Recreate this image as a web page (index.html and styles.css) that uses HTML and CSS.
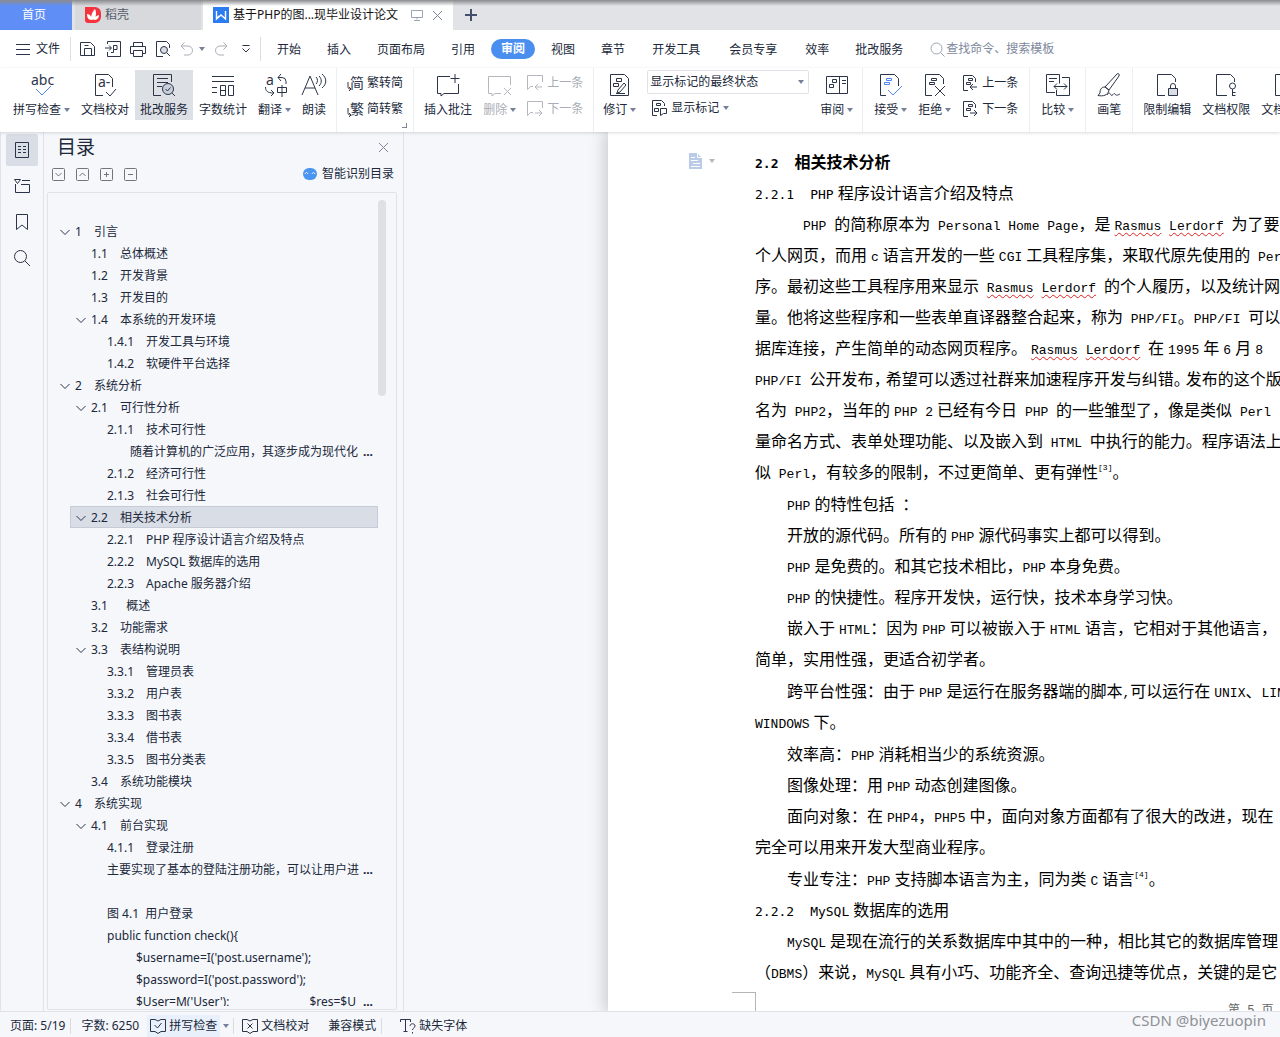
FILE: index.html
```html
<!DOCTYPE html>
<html lang="zh-CN">
<head>
<meta charset="utf-8">
<title>基于PHP的图书管理系统</title>
<link rel="stylesheet" href="styles.css">
</head>
<body>
<svg class="defs" aria-hidden="true">
  <symbol id="chev" viewBox="0 0 10 10"><path d="M.5 3l4.500 4.500L9.500 3"/></symbol>
  <symbol id="cprev" viewBox="0 0 16 16"><path d="M15.500 7V.5H.5v14l3-3H6M15 12H8M11 9l-3 3 3 3"/></symbol>
  <symbol id="cnext" viewBox="0 0 16 16"><path d="M15.500 7V.5H.5v14l3-3H6M8 12h7M12 9l3 3-3 3"/></symbol>
  <symbol id="rprev" viewBox="0 0 16 16"><path d="M6 15.500H1.500V.5h9l3 3V7M6.500 3.500h4v2h-4zM4.500 7.500h4v2h-4zM15 12H8M11 9l-3 3 3 3"/></symbol>
  <symbol id="rnext" viewBox="0 0 16 16"><path d="M6 15.500H1.500V.5h9l3 3V7M6.500 3.500h4v2h-4zM4.500 7.500h4v2h-4zM8 12h7M12 9l3 3-3 3"/></symbol>
</svg>

<header class="tabs">
  <button class="tab tab-home">首页</button>
  <button class="tab tab-docer">
    <svg width="16" height="16" viewBox="0 0 16 16"><path fill="#f5333f" d="M0 0h10a6 6 0 0 1 6 6v4a6 6 0 0 1-6 6H3a3 3 0 0 1-3-3z"/><path fill="#fff" d="M8 13C5 12 6 6 10 2c2 4 1 9-2 11zM7 13C3 13 2 10 2 7c3 0 5 3 5 6zM9 13c0-3 2-4 5-5 0 3-2 5-5 5z"/></svg>
    <span>稻壳</span>
  </button>
  <div class="tab tab-doc">
    <svg width="16" height="16" viewBox="0 0 16 16"><path fill="#2b7cf0" d="M0 0h16v16H0z"/><path fill="none" stroke="#fff" stroke-width="1.400" d="M3.500 4v8L8 8l4.500 4V4M3.500 12L6 9"/></svg>
    <span class="tab-title">基于PHP的图...现毕业设计论文</span>
    <svg class="ln muted" width="12" height="12" viewBox="0 0 12 12"><path d="M.5 1.500h11v7H.5zM6 8.500v2M3 11.500h6"/></svg>
    <button class="plain" aria-label="关闭标签"><svg class="ln close" width="11" height="11" viewBox="0 0 11 11"><path d="M1 1l9 9M10 1l-9 9"/></svg></button>
  </div>
  <button class="tab-new" aria-label="新建"><svg width="12" height="12" viewBox="0 0 12 12"><path stroke="#44506b" stroke-width="2" d="M6 0v12M0 6h12"/></svg></button>
</header>

<nav class="menu">
  <button class="plain file"><svg class="ln" width="14" height="11" viewBox="0 0 14 11"><path d="M0 .5h14M0 5.500h14M0 10.500h14"/></svg>文件</button>
  <div class="quick">
    <button class="plain" aria-label="保存"><svg class="ln" width="16" height="16" viewBox="0 0 16 16"><path d="M.5 14.500v-13h10l4 4v9zM4.500 14.500v-7h7v7M4.500 4.500h4"/></svg></button>
    <button class="plain" aria-label="输出为PDF"><svg class="ln" width="16" height="16" viewBox="0 0 16 16"><path d="M2.500 3V.5h13v15h-13V11M0 7h6M4 4.500L6.500 7 4 9.500M8.500 4.500h3.500v4H8.500zM8.500 8.500v3H6"/></svg></button>
    <button class="plain" aria-label="打印"><svg class="ln" width="16" height="16" viewBox="0 0 16 16"><path d="M3.500 5V1.500h9V5M3.500 12.500h-3v-7h15v7h-3M3.500 9.500h9v6h-9z"/></svg></button>
    <button class="plain" aria-label="打印预览"><svg class="ln" width="16" height="16" viewBox="0 0 16 16"><path d="M8 15.500H1.500V.5h10l3 3V7"/><circle cx="9" cy="9" r="3.500" fill="#d9dce3"/><path d="M12 12l3 3"/></svg></button>
    <button class="plain undo" aria-label="撤销"><svg class="ln grey" width="14" height="14" viewBox="0 0 14 14"><path d="M4.500.5L1 4l3.500 3.500M1 4h7a4.500 4.500 0 0 1 0 9H4"/></svg><i class="caret"></i></button>
    <button class="plain" aria-label="恢复"><svg class="ln grey" width="14" height="14" viewBox="0 0 14 14"><path d="M9.500.5L13 4 9.500 7.500M13 4H6a4.500 4.500 0 0 0 0 9h4"/></svg></button>
    <button class="plain more" aria-label="更多"><svg class="ln" width="8" height="8" viewBox="0 0 8 8"><path d="M.5.5h7M.5 3.500L4 7l3.500-3.500"/></svg></button>
  </div>
  <div class="items">
    <button>开始</button><button>插入</button><button>页面布局</button><button>引用</button><button class="on">审阅</button><button>视图</button><button>章节</button><button class="wide">开发工具</button><button class="wide">会员专享</button><button>效率</button><button>批改服务</button>
  </div>
  <label class="search"><svg class="ln muted" width="15" height="15" viewBox="0 0 15 15"><circle cx="6.500" cy="6.500" r="5.500"/><path d="M10.500 10.500l4 4"/></svg><input type="text" placeholder="查找命令、搜索模板" aria-label="查找命令"></label>
</nav>

<section class="ribbon">
  <div class="group">
    <button class="big"><svg class="ln" width="24" height="24" viewBox="0 0 24 24"><text x="1" y="12" class="glyph">abc</text><path stroke="#4f86f0" d="M6 16l6 6 9-9"/></svg><span>拼写检查<i class="caret"></i></span></button>
    <button class="big"><svg class="ln" width="22" height="24" viewBox="0 0 22 24"><path d="M9 22.500H1.500v-21h13l4 4V14M12 19l4 4 6-7"/><text x="4" y="14" class="glyph">a-</text></svg><span>文档校对</span></button>
    <button class="big active"><svg class="ln" width="22" height="24" viewBox="0 0 22 24"><path d="M8 22.500H.5v-21h18V9M4 5.500h11M4 9.500h11M4 13.500h5"/><circle cx="15" cy="16" r="5.500" fill="#c9cfdb"/><path d="M12.500 16l2 2 3-3.500M19 20l3 3"/></svg><span>批改服务</span></button>
    <button class="big"><svg class="ln" width="24" height="24" viewBox="0 0 24 24"><path d="M1 3.500h22M1 8.500h22M1 14.500h5M1 19.500h5M9.500 12.500h5v10h-5zM9.500 17.500h5M17.500 12.500h5v10h-5z"/></svg><span>字数统计</span></button>
    <button class="big"><svg class="ln" width="24" height="24" viewBox="0 0 24 24"><text x="3" y="12" class="glyph">a</text><path d="M18 1l-3 3.500L18 8M15 4.500h4a4 4 0 0 1 4 4V11M2.500 14c0 4 2 6 8 6M8 17l3 3-3 3M14.500 14.500h9v5h-9zM19 12v12"/></svg><span>翻译<i class="caret"></i></span></button>
    <button class="big"><svg class="ln" width="24" height="24" viewBox="0 0 24 24"><path d="M0 22L8 3l8 19M3 15h10M14 4c2 2 2 5 0 7M17 3c3 3 3 7 0 10M20 1c5 4 5 10 0 14"/></svg><span>朗读</span></button>
  </div>
  <div class="group corner">
    <div class="stack">
      <button><svg class="ln" width="16" height="16" viewBox="0 0 16 16"><text x="3" y="13" class="zh">简</text><path d="M1 7v4c0 2 0 3 3 3M2 12l2 2-2 2"/></svg>繁转简</button>
      <button><svg class="ln" width="16" height="16" viewBox="0 0 16 16"><text x="3" y="13" class="zh">繁</text><path d="M1 7v4c0 2 0 3 3 3M2 12l2 2-2 2"/></svg>简转繁</button>
    </div>
  </div>
  <div class="group">
    <button class="big"><svg class="ln" width="24" height="24" viewBox="0 0 24 24"><path d="M14 3.500H1.500v17H5V23l3-2.500h14.500V11M19 1v9M14.500 5.500h9"/></svg><span>插入批注</span></button>
    <button class="big off"><svg class="ln" width="24" height="24" viewBox="0 0 24 24"><path d="M22.500 12V3.500H.5v17H4V23l3-2.500h6M16 15l7 7M23 15l-7 7"/></svg><span>删除<i class="caret"></i></span></button>
    <div class="stack off">
      <button><svg class="ln" width="16" height="16"><use href="#cprev"/></svg>上一条</button>
      <button><svg class="ln" width="16" height="16"><use href="#cnext"/></svg>下一条</button>
    </div>
  </div>
  <div class="group snug">
    <button class="big"><svg class="ln" width="20" height="24" viewBox="0 0 20 24"><path d="M.5 1.500h14l4 4v17H.5zM6.500 5.500h5v3h-5zM3.500 10.500h5v3h-5zM8 17l6-7 2 2-6 7-3 1zM6 20.500h9"/></svg><span>修订<i class="caret"></i></span></button>
    <div class="stack marks">
      <label class="pick"><select aria-label="显示标记状态"><option>显示标记的最终状态</option></select><i class="caret"></i></label>
      <button><svg class="ln" width="16" height="16" viewBox="0 0 16 16"><path d="M6 15.500H1.500V.5h9l3 3V6M5.500 3.500h4v2h-4zM3.500 8.500h4v3h-4zM9.500 8.500h6v5h-3l-3 2z"/></svg>显示标记<i class="caret"></i></button>
    </div>
    <button class="big"><svg class="ln" width="24" height="24" viewBox="0 0 24 24"><path d="M1.500 3.500h21v17h-21zM14.500 3.500v17M7.500 6.500h4v3h-4zM4.500 11.500h4v3h-4zM17 7.500h4M17 10.500h4"/></svg><span>审阅<i class="caret"></i></span></button>
  </div>
  <div class="group roomy">
    <button class="big"><svg class="ln" width="22" height="24" viewBox="0 0 22 24"><path d="M6 22.500H.5v-21h14l4 4V13"/><path stroke="#4f86f0" d="M6.500 5.500h5v2h-5zM4.500 9.500h5v2h-5zM8 17l5 5 9-9"/></svg><span>接受<i class="caret"></i></span></button>
    <button class="big"><svg class="ln" width="22" height="24" viewBox="0 0 22 24"><path d="M8 22.500H1.500v-21h14l4 4V11M7.500 5.500h5v2h-5zM5.500 9.500h5v2h-5zM11 13l10 10M21 13L11 23"/></svg><span>拒绝<i class="caret"></i></span></button>
    <div class="stack">
      <button><svg class="ln" width="16" height="16"><use href="#rprev"/></svg>上一条</button>
      <button><svg class="ln" width="16" height="16"><use href="#rnext"/></svg>下一条</button>
    </div>
  </div>
  <div class="group roomy">
    <button class="big"><svg class="ln" width="24" height="24" viewBox="0 0 24 24"><path d="M9 19.500H.5v-18h13v9M3 5.500h8M3 8.500h5M16 4.500h7.500v18h-13V17M8 13.500h13M11 10.500l-3 3 3 3M18 10.500l3 3-3 3"/></svg><span>比较<i class="caret"></i></span></button>
  </div>
  <div class="group roomy">
    <button class="big"><svg class="ln" width="24" height="24" viewBox="0 0 24 24"><path d="M8 14L20 1c1-1 3 0 2 2L12 17zM8 14c-4 0-5 3-5 6l-2 2.500c5 1 10 0 11-5.500zM10 22c2-3 3-2 4 0s3-3 4-1 3 1 5 0"/></svg><span>画笔</span></button>
  </div>
  <div class="group">
    <button class="big"><svg class="ln" width="22" height="24" viewBox="0 0 22 24"><path d="M9 22.500H1.500v-21h14l4 4V9"/><path fill="#d9dce3" d="M12.500 15.500h9v7h-9z"/><path d="M14.500 15.500V13a2.500 2.500 0 0 1 5 0v2.500"/></svg><span>限制编辑</span></button>
    <button class="big"><svg class="ln" width="22" height="24" viewBox="0 0 22 24"><path d="M12 22.500H1.500v-21h14l4 4V9"/><circle cx="17.500" cy="13" r="3"/><path d="M17.500 16v7M17.500 19.500h3M17.500 22.500h3"/></svg><span>文档权限</span></button>
    <button class="big"><svg class="ln" width="22" height="24" viewBox="0 0 22 24"><path d="M9 22.500H1.500v-21h14l4 4V9"/></svg><span>文档认证</span></button>
  </div>
</section>

<main class="work">
  <aside class="rail">
    <button class="on" aria-label="目录"><svg class="ln" width="16" height="18" viewBox="0 0 16 18"><path d="M1.500 1.500h13v15h-13zM4 5.500h3M9 5.500h3M4 8.500h3M9 8.500h3M4 11.500h3M9 11.500h3"/></svg></button>
    <button aria-label="章节"><svg class="ln" width="16" height="18" viewBox="0 0 16 18"><path d="M.5 2.500h6l-3 4zM8 3.500h8M1.500 7v8.500h14v-8H7"/></svg></button>
    <button aria-label="书签"><svg class="ln" width="16" height="18" viewBox="0 0 16 18"><path d="M2.500 1.500h11v15L8 12l-5.500 4.500z"/></svg></button>
    <button aria-label="查找"><svg class="ln" width="18" height="18" viewBox="0 0 18 18"><circle cx="7.500" cy="7.500" r="6"/><path d="M12 12l5 5"/></svg></button>
  </aside>

  <section class="outline">
    <div class="title"><h1>目录</h1><button class="plain" aria-label="关闭"><svg class="ln close" width="11" height="11" viewBox="0 0 11 11"><path d="M1 1l9 9M10 1l-9 9"/></svg></button></div>
    <div class="tools">
      <button class="plain" aria-label="展开"><svg class="ln box" width="13" height="13" viewBox="0 0 13 13"><rect x=".5" y=".5" width="12" height="12" rx="1"/><path d="M3.500 5l3 3 3-3"/></svg></button>
      <button class="plain" aria-label="收起"><svg class="ln box" width="13" height="13" viewBox="0 0 13 13"><rect x=".5" y=".5" width="12" height="12" rx="1"/><path d="M3.500 8l3-3 3 3"/></svg></button>
      <button class="plain" aria-label="增加"><svg class="ln box" width="13" height="13" viewBox="0 0 13 13"><rect x=".5" y=".5" width="12" height="12" rx="1"/><path d="M6.500 4v5M4 6.500h5"/></svg></button>
      <button class="plain" aria-label="减少"><svg class="ln box" width="13" height="13" viewBox="0 0 13 13"><rect x=".5" y=".5" width="12" height="12" rx="1"/><path d="M4 6.500h5"/></svg></button>
      <button class="plain smart"><svg width="14" height="12" viewBox="0 0 14 12"><rect width="14" height="12" rx="6" fill="#4a94f2"/><path fill="none" stroke="#fff" d="M2 6c1-2 2-2 3 0M9 6c1-2 2-2 3 0"/></svg>智能识别目录</button>
    </div>
    <div class="tree">
      <div class="view">
        <ul>
          <li><div class="row"><button class="plain" aria-label="折叠"><svg class="ln"><use href="#chev"/></svg></button><b>1</b>引言</div>
            <ul>
              <li><div class="row"><b>1.1</b>总体概述</div></li>
              <li><div class="row"><b>1.2</b>开发背景</div></li>
              <li><div class="row"><b>1.3</b>开发目的</div></li>
              <li><div class="row"><button class="plain" aria-label="折叠"><svg class="ln"><use href="#chev"/></svg></button><b>1.4</b>本系统的开发环境</div>
                <ul>
                  <li><div class="row"><b>1.4.1</b>开发工具与环境</div></li>
                  <li><div class="row"><b>1.4.2</b>软硬件平台选择</div></li>
                </ul></li>
            </ul></li>
          <li><div class="row"><button class="plain" aria-label="折叠"><svg class="ln"><use href="#chev"/></svg></button><b>2</b>系统分析</div>
            <ul>
              <li><div class="row"><button class="plain" aria-label="折叠"><svg class="ln"><use href="#chev"/></svg></button><b>2.1</b>可行性分析</div>
                <ul>
                  <li><div class="row"><b>2.1.1</b>技术可行性</div></li>
                  <li><div class="row first-line">随着计算机的广泛应用，其逐步成为现代化<em>...</em></div></li>
                  <li><div class="row"><b>2.1.2</b>经济可行性</div></li>
                  <li><div class="row"><b>2.1.3</b>社会可行性</div></li>
                </ul></li>
              <li><div class="row selected"><button class="plain" aria-label="折叠"><svg class="ln"><use href="#chev"/></svg></button><b>2.2</b>相关技术分析</div>
                <ul>
                  <li><div class="row"><b>2.2.1</b>PHP 程序设计语言介绍及特点</div></li>
                  <li><div class="row"><b>2.2.2</b>MySQL 数据库的选用</div></li>
                  <li><div class="row"><b>2.2.3</b>Apache 服务器介绍</div></li>
                </ul></li>
              <li><div class="row"><b>3.1</b>&nbsp; 概述</div></li>
              <li><div class="row"><b>3.2</b>功能需求</div></li>
              <li><div class="row"><button class="plain" aria-label="折叠"><svg class="ln"><use href="#chev"/></svg></button><b>3.3</b>表结构说明</div>
                <ul>
                  <li><div class="row"><b>3.3.1</b>管理员表</div></li>
                  <li><div class="row"><b>3.3.2</b>用户表</div></li>
                  <li><div class="row"><b>3.3.3</b>图书表</div></li>
                  <li><div class="row"><b>3.3.4</b>借书表</div></li>
                  <li><div class="row"><b>3.3.5</b>图书分类表</div></li>
                </ul></li>
              <li><div class="row"><b>3.4</b>系统功能模块</div></li>
            </ul></li>
          <li><div class="row"><button class="plain" aria-label="折叠"><svg class="ln"><use href="#chev"/></svg></button><b>4</b>系统实现</div>
            <ul>
              <li><div class="row"><button class="plain" aria-label="折叠"><svg class="ln"><use href="#chev"/></svg></button><b>4.1</b>前台实现</div>
                <ul>
                  <li><div class="row"><b>4.1.1</b>登录注册</div></li>
                  <li><div class="row">主要实现了基本的登陆注册功能，可以让用户进<em>...</em></div></li>
                  <li><div class="row"></div></li>
                  <li><div class="row">图 4.1&nbsp; 用户登录</div></li>
                  <li><div class="row">public function check(){</div></li>
                  <li><div class="row code">$username=I('post.username');</div></li>
                  <li><div class="row code">$password=I('post.password');</div></li>
                  <li><div class="row code">$User=M('User');<span class="tail">$res=$U</span><em>...</em></div></li>
                </ul></li>
            </ul></li>
        </ul>
        <i class="thumb"></i>
      </div>
    </div>
  </section>

  <section class="canvas">
    <div class="sheet">
      <div class="content">
        <div class="gutter"><svg width="13" height="16" viewBox="0 0 13 16"><path fill="#b9cbe6" d="M0 0h8l5 5v11H0z"/><path fill="none" stroke="#fff" d="M8.500 0v4.500H13M2 4.500h4M2 7.500h7M4 10.500h7M2 13.500h9"/></svg><i class="caret"></i></div>
        <article>
          <h2><span>2.2</span>相关技术分析</h2>
          <h3><span>2.2.1</span><i class="en r">PHP</i>程序设计语言介绍及特点</h3>
          <p class="long deep"><i class="en">PHP </i>的简称原本为<i class="en"> Personal Home Page</i>，是<i class="en l"><u>Rasmus</u> <u>Lerdorf</u> </i>为了要<br>个人网页，而用<i class="en l r">c</i>语言开发的一些<i class="en l r">CGI</i>工具程序集，来取代原先使用的<i class="en"> Perl</i><br>序。最初这些工具程序用来显示<i class="en"> <u>Rasmus</u> <u>Lerdorf</u> </i>的个人履历，以及统计网<br>量。他将这些程序和一些表单直译器整合起来，称为<i class="en"> PHP/FI</i>。<i class="en">PHP/FI </i>可以<br>据库连接，产生简单的动态网页程序。<i class="en l"><u>Rasmus</u> <u>Lerdorf</u> </i>在<i class="en l r">1995</i>年<i class="en l r">6</i>月<i class="en l">8</i><br><i class="en">PHP/FI </i>公开发布<span class="tight">，</span>希望可以透过社群来加速程序开发与纠错<span class="tight">。</span>发布的这个版<br>名为<i class="en"> PHP2</i>，当年的<i class="en l r">PHP 2</i>已经有今日<i class="en"> PHP </i>的一些雏型了，像是类似<i class="en"> Perl</i><br>量命名方式、表单处理功能、以及嵌入到<i class="en"> HTML </i>中执行的能力。程序语法上<br>似<i class="en"> Perl</i>，有较多的限制，不过更简单、更有弹性<sup>[3]</sup>。</p>
          <p><i class="en r">PHP</i>的特性包括<i class="en"> </i>：</p>
          <p>开放的源代码。所有的<i class="en l r">PHP</i>源代码事实上都可以得到。</p>
          <p><i class="en r">PHP</i>是免费的。和其它技术相比，<i class="en r">PHP</i>本身免费。</p>
          <p><i class="en r">PHP</i>的快捷性。程序开发快，运行快，技术本身学习快。</p>
          <p class="long">嵌入于<i class="en l">HTML</i>：因为<i class="en l r">PHP</i>可以被嵌入于<i class="en l r">HTML</i>语言，它相对于其他语言，<br>简单，实用性强，更适合初学者。</p>
          <p class="long">跨平台性强：由于<i class="en l r">PHP</i>是运行在服务器端的脚本<i class="en">,</i>可以运行在<i class="en l">UNIX</i>、<i class="en">LINUX</i><br><i class="en r">WINDOWS</i>下。</p>
          <p>效率高：<i class="en r">PHP</i>消耗相当少的系统资源。</p>
          <p>图像处理：用<i class="en l r">PHP</i>动态创建图像。</p>
          <p class="long">面向对象：在<i class="en l">PHP4</i>，<i class="en r">PHP5</i>中，面向对象方面都有了很大的改进，现在<br>完全可以用来开发大型商业程序。</p>
          <p>专业专注：<i class="en r">PHP</i>支持脚本语言为主，同为类<i class="en l r">C</i>语言<sup>[4]</sup>。</p>
          <h3><span>2.2.2</span><i class="en r">MySQL</i>数据库的选用</h3>
          <p><i class="en r">MySQL</i>是现在流行的关系数据库中其中的一种，相比其它的数据库管理<br>（<i class="en">DBMS</i>）来说，<i class="en r">MySQL</i>具有小巧、功能齐全、查询迅捷等优点，关键的是它</p>
        </article>
      </div>
      <footer class="margin"><i class="crop"></i><span>第 5 页 共</span></footer>
    </div>
  </section>
</main>

<footer class="status">
  <span class="cell line">页面: 5/19</span>
  <span class="cell">字数: 6250</span>
  <button class="plain spell"><svg class="ln" width="16" height="16" viewBox="0 0 16 16"><path d="M5 1.500H.5v12H5l3 2 3-2h4.500v-12H11L8 3zM4.500 7l3 3 4-5"/></svg>拼写检查</button>
  <button class="plain drop line" aria-label="拼写选项"><i class="caret"></i></button>
  <button class="plain cell proof"><svg class="ln" width="16" height="16" viewBox="0 0 16 16"><path d="M5 1.500H.5v12H5l3 2 3-2h4.500v-12H11L8 3zM5.500 5.500l5 5M10.500 5.500l-5 5"/></svg>文档校对</button>
  <span class="cell line">兼容模式</span>
  <button class="plain cell fonts"><svg class="ln" width="16" height="16" viewBox="0 0 16 16"><path d="M.5 4V1.500h10V4M5.500 1.500v12M3.500 13.500h4M10 8c0-3 5-3 5 0 0 2-2.500 2-2.500 4M12.500 14v1.500"/></svg>缺失字体</button>
  <span class="credit">CSDN @biyezuopin</span>
</footer>
</body>
</html>
```
FILE: styles.css
```css
* { box-sizing: border-box; }
body {
  margin: 0; height: 100vh; display: flex; flex-direction: column; overflow: hidden;
  font: 12px/16px "Noto Sans", "Noto Sans CJK SC", sans-serif; color: #20283a; background: #f5f7fa;
}
button { font: inherit; color: inherit; background: none; border: 0; padding: 0; white-space: nowrap; }
svg { display: block; flex: none; overflow: visible; }
i, em { font-style: normal; }
.plain { display: flex; align-items: center; }
.defs { position: absolute; width: 0; height: 0; }
.ln { fill: none; stroke: #2b3449; }
.ln.muted { stroke: #9aa3b5; }
.ln.grey { stroke: #a9adb5; }
.ln.close { stroke: #7b8499; }
.ln.box { stroke: #70757f; }
.glyph { font: 14px "Noto Sans", sans-serif; fill: #2b3449; stroke: none; }
.zh { font: 14px "Noto Sans CJK SC", sans-serif; fill: #2b3449; stroke: none; }
.caret { display: inline-block; border: 3px solid transparent; border-top: 4px solid #76809a; border-bottom: 0; flex: none; }

/* tab strip */
.tabs { display: flex; height: 30px; flex: none; background: #e2e3e7; position: relative; }
.tabs::before { content: ""; position: absolute; inset: 0 0 auto; height: 6px; background: linear-gradient(#8a8b8e, rgba(160, 160, 165, 0)); }
.tab { display: flex; align-items: center; }
.tab-home { width: 72px; padding-right: 4px; margin-right: 3px; justify-content: center; background: #608ef7; color: #fff; }
.tab-docer { width: 126px; margin-right: 2px; padding-left: 10px; gap: 4px; background: #d8d9dc; color: #555b66; }
.tab-doc { width: 250px; padding: 0 10px; gap: 4px; background: #fff; color: #111; }
.tab-title { flex: 1; white-space: nowrap; }
.tab-doc .plain { margin-left: 5px; }
.tab-new { padding: 0 12px; }

/* menu row */
.menu { display: flex; align-items: center; height: 38px; flex: none; background: #fff; white-space: nowrap; }
.file { gap: 6px; padding: 0 10px 0 16px; height: 24px; border-right: 1px solid #dcdfe5; }
.quick { display: flex; align-items: center; gap: 9px; padding: 0 10px 0 9px; height: 24px; border-right: 1px solid #dcdfe5; }
.undo { gap: 5px; }
.more { padding-left: 5px; }
.items { display: flex; padding-left: 3px; }
.items button { height: 20px; padding: 1px 13px 0; }
.items .wide { padding: 1px 15px 0 14px; }
.items .on { padding: 0 10px; margin: 0 3px; border-radius: 10px; background: #4a8ff0; color: #fff; font-weight: 700; }
.search { display: flex; align-items: center; padding-left: 14px; flex: 1; }
.search input { flex: 1; min-width: 0; border: 0; padding: 0 1px; font: inherit; background: none; }
.search input::placeholder { color: #7d879c; }

/* ribbon */
.ribbon { display: flex; flex: none; height: 64px; overflow: hidden; background: #fff; box-shadow: 0 1px 3px rgba(0, 0, 0, .15); z-index: 1; }
.group { display: flex; gap: 1px; padding: 2px 5px 0; border-right: 1px solid #eceef1; flex: none; }
.group:first-child { padding-left: 8px; }
.roomy { padding: 2px 6px 0; }
.snug { padding: 2px 4px 0; }
.big { display: flex; flex-direction: column; align-items: center; gap: 5px; height: 50px; padding: 3px 5px 0; }
.big span { display: flex; align-items: center; }
.big .caret { margin-left: 3px; }
.active { background: #dde1e6; }
.stack { display: flex; flex-direction: column; padding: 0 5px; }
.stack button { display: flex; align-items: center; gap: 4px; height: 26px; }
.off { color: #a9adb5; }
.off .ln { stroke: #b4b7bd; }
.corner { position: relative; }
.corner::after { content: ""; position: absolute; right: 6px; bottom: 4px; width: 4px; height: 4px; border: solid #7b8499; border-width: 0 1px 1px 0; }
.marks > button { height: 28px; padding-left: 4px; }
.pick { display: flex; align-items: center; width: 162px; height: 24px; padding-right: 4px; border: 1px solid #dfe2e7; border-radius: 2px; }
.pick select { flex: 1; appearance: none; border: 0; padding: 0 2px; font: inherit; color: inherit; background: none; }

/* side rail */
.work { display: flex; flex: 1; min-height: 0; }
.rail { display: flex; flex-direction: column; gap: 4px; width: 44px; flex: none; padding: 2px 5px; border: solid #e0e3e9; border-width: 0 1px; }
.rail button { display: grid; place-items: center; width: 32px; height: 32px; border-radius: 2px; }
.rail .on { background: #d9dde5; }

/* outline panel */
.outline { display: flex; flex-direction: column; width: 360px; flex: none; padding: 0 6px 0 3px; border-right: 1px solid #e0e3e9; }
.title { display: flex; justify-content: space-between; align-items: center; height: 30px; padding: 0 8px 0 10px; }
.title h1 { margin: 0; font-size: 19px; font-weight: 400; }
.tools { display: flex; align-items: center; gap: 11px; height: 24px; padding: 0 3px 0 5px; margin-bottom: 6px; }
.smart { gap: 5px; margin-left: auto; }
.tree { flex: 1; min-height: 0; padding-bottom: 3px; margin-bottom: 1px; border: 1px solid #dfe3ea; border-radius: 2px; }
.view { position: relative; height: 100%; overflow: hidden; padding: 27px 18px 0 6px; }
.thumb { position: absolute; top: 7px; right: 10px; width: 8px; height: 196px; border-radius: 4px; background: #dde0e4; }
.tree ul { list-style: none; margin: 0; padding: 0; }
.tree ul ul { padding-left: 16px; }
.row { display: flex; align-items: center; height: 22px; padding: 2px 0 0 21px; white-space: pre; }
.row .plain { margin-left: -15px; width: 15px; }
.row svg { width: 10px; height: 10px; }
.row b { font-weight: 400; width: 19px; }
.tree ul ul b { width: 29px; }
.tree ul ul ul b { width: 39px; }
.row em { margin: 0 5px 0 auto; font-weight: 700; }
.first-line { padding-left: 44px; }
.code { padding-left: 50px; }
.tail { margin-left: 80px; }
.selected { background: #d9dde5; box-shadow: inset 0 0 0 1px #c5ccd7; }

/* document */
.canvas { flex: 1; min-width: 0; padding-left: 204px; overflow: hidden; }
.sheet { height: 100%; overflow: hidden; background: #fff; box-shadow: 0 0 16px 2px rgba(60, 65, 75, .28); color: #000; white-space: nowrap; }
.content { display: flex; padding-top: 13px; }
.gutter { display: flex; gap: 7px; width: 147px; flex: none; padding: 8px 0 0 81px; }
.gutter .caret { margin-top: 6px; border-top-color: #b4b8c0; }
article { font: 16px/31px "Noto Sans CJK SC", sans-serif; text-autospace: no-autospace; text-spacing-trim: space-all; }
article h2, article h3, article p { margin: 0; }
article h2, article h3 { font-size: 16px; font-weight: 400; }
article h2 { font-weight: 700; line-height: 32px; }
.en { font: 13px/16px "Liberation Mono", monospace; white-space: pre; }
article h2 span, article h3 span, article h3 .en { font: 13px/16px "DejaVu Sans Mono", monospace; font-weight: inherit; }
article h2 span, article h3 span { margin-right: 16px; }
article p { text-indent: 32px; }
article .deep { text-indent: 48px; }
article .long { margin-bottom: 1px; }
.l { margin-left: 4px; }
.r { margin-right: 4px; }
.tight { margin-right: -4px; }
.en u { text-decoration: underline wavy #e02020 1px; text-underline-offset: 2px; }
article sup { font: 8px/8px "Liberation Mono", monospace; vertical-align: 8px; }
.margin { display: flex; gap: 472px; padding: 5px 0 0 124px; }
.crop { width: 24px; height: 30px; border: solid #b5b5b5; border-width: 1px 1px 0 0; flex: none; }
.margin span { padding-top: 11px; font-family: "Liberation Mono", "Noto Sans CJK SC", monospace; color: #666; }

/* status bar */
.status { display: flex; align-items: center; height: 26px; flex: none; position: relative; padding: 3px 0 0 10px; border-top: 1px solid #dfe2e7; background: #f5f7fa; white-space: nowrap; z-index: 1; }
.line { border-right: 1px solid #d9dce2; }
.cell { padding-right: 5px; margin-right: 10px; }
.spell { gap: 3px; height: 22px; padding: 0 3px; margin-left: -7px; background: #e8f0fb; }
.drop { padding: 6px 4px 6px 3px; margin-right: 8px; }
.proof { gap: 3px; margin-right: 14px; }
.fonts { gap: 3px; margin-left: 8px; }
.credit { position: absolute; right: 14px; top: 0; font: 15px/16px "Noto Sans", sans-serif; color: #8f9196; }
```
